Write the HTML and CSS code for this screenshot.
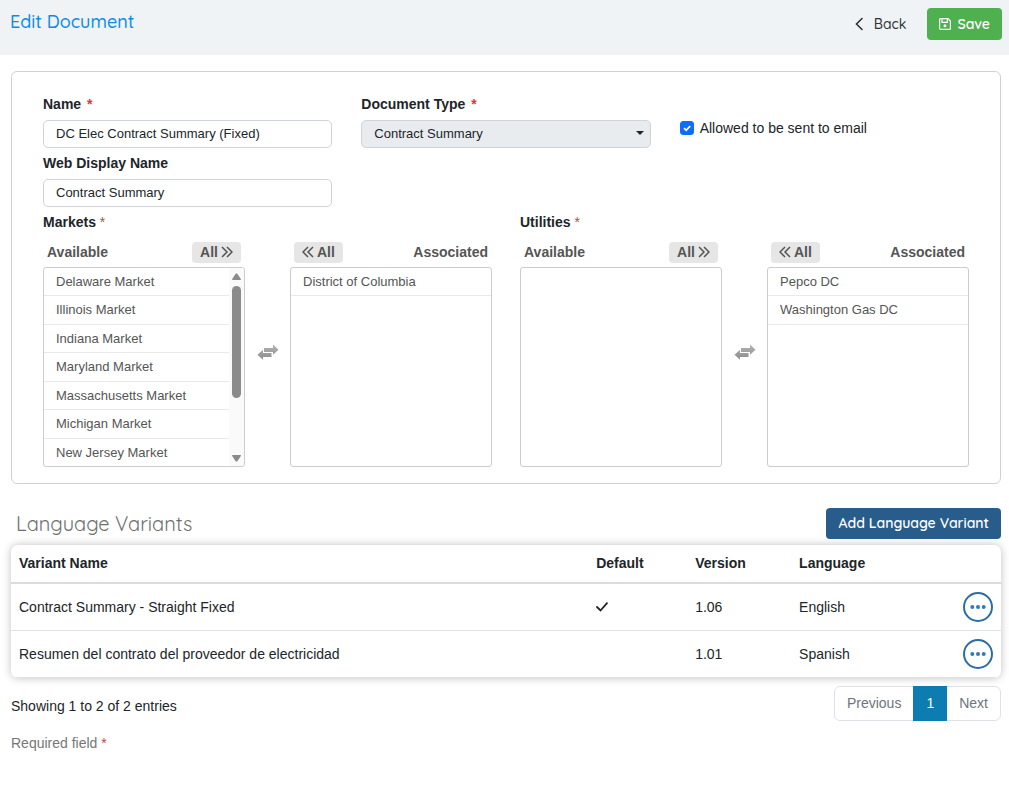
FILE: index.html
```html
<!DOCTYPE html>
<html lang="en">
<head>
<meta charset="utf-8">
<meta name="viewport" content="width=device-width, initial-scale=1">
<title>Edit Document</title>
<link rel="stylesheet" href="styles.css">
</head>
<body>
<svg class="sprite" aria-hidden="true">
  <defs>
    <linearGradient id="metal" x1="0" y1="0" x2="0" y2="1">
      <stop offset="0" stop-color="#b4b4b4"/>
      <stop offset="1" stop-color="#8c8c8c"/>
    </linearGradient>
  </defs>
  <symbol id="i-right" viewBox="0 0 12 12"><path d="M1 1l5 5-5 5M6 1l5 5-5 5" fill="none" stroke="currentColor" stroke-width="1.5"/></symbol>
  <symbol id="i-left" viewBox="0 0 12 12"><path d="M6 1L1 6l5 5M11 1L6 6l5 5" fill="none" stroke="currentColor" stroke-width="1.5"/></symbol>
  <symbol id="i-swap" viewBox="0 0 22 16"><path d="M7 4h9V.5L21.500 5.700l-5.500 5V8H7zM14.500 9H6V5.700L.5 10.800l5.500 5V13h8.500z" fill="url(#metal)"/></symbol>
  <symbol id="i-dots" viewBox="0 0 16 4"><g fill="currentColor"><circle cx="2.300" cy="2" r="2"/><circle cx="8" cy="2" r="2"/><circle cx="13.700" cy="2" r="2"/></g></symbol>
</svg>

<header class="topbar">
  <h1 class="title">Edit Document</h1>
  <div class="actions">
    <a class="back" href="#"><svg width="8" height="14" viewBox="0 0 8 14" aria-hidden="true"><path d="M7 1.500L1.500 7 7 12.500" fill="none" stroke="currentColor" stroke-width="1.600" stroke-linecap="round"/></svg>Back</a>
    <button class="btn save" type="button"><svg width="12" height="12" viewBox="0 0 12 12" fill="none" stroke="currentColor" stroke-width="1.200" aria-hidden="true"><path d="M1.600.6H9L11.400 3v7.400a1 1 0 0 1-1 1H1.600a1 1 0 0 1-1-1V1.600a1 1 0 0 1 1-1zM3 .8v3.500h5.300V.8"/><circle cx="6" cy="7.800" r="1.500" fill="currentColor" stroke="none"/></svg>Save</button>
  </div>
</header>

<main class="page">
  <form class="card">
    <div class="fields">
      <div class="column">
        <div class="field">
          <label for="name">Name <span class="star">*</span></label>
          <input class="control" id="name" type="text" value="DC Elec Contract Summary (Fixed)">
        </div>
        <div class="field">
          <label for="web-name">Web Display Name</label>
          <input class="control" id="web-name" type="text" value="Contract Summary">
        </div>
      </div>
      <div class="column">
        <div class="field">
          <label for="doc-type">Document Type <span class="star">*</span></label>
          <div class="select-wrap">
            <select class="control select" id="doc-type"><option>Contract Summary</option></select>
            <svg class="caret" width="8" height="4" viewBox="0 0 8 4" aria-hidden="true"><path d="M0 0h8L4 4z" fill="#212529"/></svg>
          </div>
        </div>
      </div>
      <div class="check">
        <span class="tick-wrap">
          <input class="tick" id="email-ok" type="checkbox" checked>
          <svg class="tick-mark" width="14" height="14" viewBox="0 0 14 14" aria-hidden="true"><path d="M4 7.200l2.200 2.100L10.200 5" fill="none" stroke="#fff" stroke-width="1.800"/></svg>
        </span>
        <label for="email-ok">Allowed to be sent to email</label>
      </div>
    </div>

    <div class="pickers">
      <section class="picker">
        <h2 class="legend">Markets <span class="req">*</span></h2>
        <div class="lists">
          <div class="side">
            <div class="side-head"><span>Available</span><button class="all" type="button">All <svg width="12" height="12"><use href="#i-right"/></svg></button></div>
            <div class="box">
              <ul class="items">
                <li>Delaware Market</li><li>Illinois Market</li><li>Indiana Market</li><li>Maryland Market</li><li>Massachusetts Market</li><li>Michigan Market</li><li>New Jersey Market</li>
              </ul>
              <div class="scroll" aria-hidden="true">
                <svg width="9" height="7" viewBox="0 0 9 7"><path d="M3.800.5h1.400L9 6.200 8.500 7h-8L0 6.200z"/></svg>
                <div class="track"><div class="thumb"></div></div>
                <svg width="9" height="7" viewBox="0 0 9 7"><path d="M.5 0h8l.5.800-3.800 5.700H3.800L0 .8z"/></svg>
              </div>
            </div>
          </div>
          <svg class="swap" width="22" height="16" aria-hidden="true"><use href="#i-swap"/></svg>
          <div class="side">
            <div class="side-head"><button class="all" type="button"><svg width="12" height="12"><use href="#i-left"/></svg> All</button><span>Associated</span></div>
            <div class="box"><ul class="items"><li>District of Columbia</li></ul></div>
          </div>
        </div>
      </section>
      <section class="picker">
        <h2 class="legend">Utilities <span class="req">*</span></h2>
        <div class="lists">
          <div class="side">
            <div class="side-head"><span>Available</span><button class="all" type="button">All <svg width="12" height="12"><use href="#i-right"/></svg></button></div>
            <div class="box"></div>
          </div>
          <svg class="swap" width="22" height="16" aria-hidden="true"><use href="#i-swap"/></svg>
          <div class="side">
            <div class="side-head"><button class="all" type="button"><svg width="12" height="12"><use href="#i-left"/></svg> All</button><span>Associated</span></div>
            <div class="box"><ul class="items"><li>Pepco DC</li><li>Washington Gas DC</li></ul></div>
          </div>
        </div>
      </section>
    </div>
  </form>

  <div class="section-head">
    <h2 class="section-title">Language Variants</h2>
    <button class="btn add" type="button">Add Language Variant</button>
  </div>

  <div class="panel">
    <table class="variants">
      <colgroup><col class="c-name"><col class="c-default"><col class="c-version"><col class="c-language"></colgroup>
      <thead><tr><th>Variant Name</th><th>Default</th><th>Version</th><th colspan="2">Language</th></tr></thead>
      <tbody>
        <tr>
          <td>Contract Summary - Straight Fixed</td>
          <td><svg class="mark" width="12" height="10" viewBox="0 0 12 10" role="img" aria-label="Yes"><path d="M1 5l3.500 3.500L11 1.200" fill="none" stroke="currentColor" stroke-width="1.800" stroke-linecap="round"/></svg></td>
          <td>1.06</td><td>English</td>
          <td class="menu-cell"><button class="more" type="button" aria-label="Actions"><svg width="16" height="4"><use href="#i-dots"/></svg></button></td>
        </tr>
        <tr>
          <td>Resumen del contrato del proveedor de electricidad</td>
          <td></td><td>1.01</td><td>Spanish</td>
          <td class="menu-cell"><button class="more" type="button" aria-label="Actions"><svg width="16" height="4"><use href="#i-dots"/></svg></button></td>
        </tr>
      </tbody>
    </table>
  </div>

  <div class="table-foot">
    <p class="info">Showing 1 to 2 of 2 entries</p>
    <nav class="pages" aria-label="Pages">
      <button type="button">Previous</button><button class="current" type="button" aria-current="page">1</button><button type="button">Next</button>
    </nav>
  </div>
  <p class="note">Required field <span class="req">*</span></p>
</main>
</body>
</html>
```
FILE: styles.css
```css
* { box-sizing: border-box; }
body {
  margin: 0;
  background: #fff;
  color: #212529;
  font: 14px/20px "Liberation Sans", Arial, sans-serif;
}
h1, h2, p, ul { margin: 0; padding: 0; }
button, input, select { font: inherit; color: inherit; }
button { cursor: pointer; }
svg { flex: none; }
.sprite { position: absolute; width: 0; height: 0; }

.topbar {
  display: flex;
  justify-content: space-between;
  align-items: flex-start;
  padding: 8px 7px 15px 10px;
  background: #eff3f6;
}
.title {
  color: #0d8ce6;
  font: 500 18px/28px Quicksand, Lato, sans-serif;
}
.actions { display: flex; align-items: center; gap: 21px; }
.back {
  display: flex;
  align-items: center;
  gap: 11px;
  color: #2f3337;
  font: 500 14px/20px Quicksand, Lato, sans-serif;
  text-decoration: none;
}
.btn {
  display: flex;
  align-items: center;
  justify-content: center;
  gap: 6px;
  border: 0;
  border-radius: 4px;
  color: #fff;
  font: 600 14px/20px Quicksand, Lato, sans-serif;
}
.save { padding: 6px 12px; background: #4fb050; }
.add { padding: 5px 12px 6px; background: #285c8b; }

.page { padding: 16px 8px 32px 11px; }
.card {
  padding: 22px 31px 16px;
  border: 1px solid #ced2d6;
  border-radius: 6px;
}
.fields { display: grid; grid-template-columns: repeat(3, 1fr); gap: 29px; }
.column, .field { display: flex; flex-direction: column; }
.column { gap: 5px; }
.field { gap: 6px; }
.field label, .legend { font-size: 14px; line-height: 20px; font-weight: 700; }
.star { margin-left: 2px; color: #dc3545; }
.req { color: #b94a48; font-weight: 400; }
.control {
  width: 100%;
  height: 28px;
  padding: 0 12px 2px;
  border: 1px solid #ced4da;
  border-radius: 5px;
  background: #fff;
  font-size: 13px;
}
.select-wrap { position: relative; }
.select { display: block; padding-bottom: 0; appearance: none; background: #e9ecef; }
.caret { position: absolute; right: 7px; top: 11px; pointer-events: none; }
.check { display: flex; align-items: center; align-self: start; gap: 6px; padding-top: 24px; }
.tick-wrap { position: relative; display: flex; }
.tick {
  width: 14px;
  height: 14px;
  margin: 0;
  border: 1px solid #ced4da;
  border-radius: 3px;
  appearance: none;
}
.tick:checked { border-color: #0d6efd; background: #0d6efd; }
.tick-mark { position: absolute; inset: 0; pointer-events: none; }

.pickers { display: grid; grid-template-columns: 1fr 1fr; gap: 28px; margin-top: 5px; }
.lists { display: grid; grid-template-columns: 1fr 45px 1fr; margin-top: 10px; color: #555; }
.side-head {
  display: flex;
  justify-content: space-between;
  align-items: flex-start;
  padding: 0 4px;
  margin-bottom: 4px;
  font-weight: 700;
}
.all {
  display: flex;
  align-items: center;
  gap: 3px;
  height: 21px;
  padding: 0 8px 2px;
  border: 0;
  border-radius: 4px;
  background: #e6e6e6;
  font-weight: 700;
}
.box {
  display: flex;
  height: 200px;
  border: 1px solid #ccc;
  border-radius: 3px;
  overflow: hidden;
}
.items { flex: 1; list-style: none; font-size: 13px; line-height: 19px; }
.items li { padding: 4px 12px; border-bottom: 1px solid #e9e9e9; }
.items li:nth-child(even) { padding-bottom: 5px; }
.scroll {
  display: flex;
  flex-direction: column;
  align-items: center;
  width: 15px;
  padding: 5px 0 4px;
  gap: 6px;
  background: #fafafa;
  fill: #8b8b8b;
}
.track { flex: 1; width: 9px; }
.thumb { height: 69%; border-radius: 5px; background: #8b8b8b; }
.swap { align-self: center; justify-self: center; margin-top: -6px; }

.section-head {
  display: flex;
  justify-content: space-between;
  align-items: center;
  margin: 24px 0 6px;
  padding-left: 5px;
}
.section-title { color: #6f6f6f; font: 400 20px/28px Quicksand, Lato, sans-serif; }

.panel {
  border-radius: 7px;
  box-shadow: 0 0 8px rgba(0, 0, 0, .25);
  overflow: hidden;
}
.variants { width: 100%; border-collapse: collapse; table-layout: fixed; }
.c-name { width: 58.3%; }
.c-default { width: 10%; }
.c-version { width: 10.5%; }
.c-language { width: 14%; }
.variants th { padding: 8px 8px 9px; text-align: left; }
.variants td { padding: 8px; }
.variants tbody tr { border-top: 1px solid #dee2e6; }
.variants tbody tr:first-child { border-top: 2px solid #dcdcdc; }
.variants tbody tr:last-child { border-bottom: 1px solid #dee2e6; }
.mark { display: block; }
.menu-cell { text-align: right; }
.more {
  display: inline-flex;
  align-items: center;
  justify-content: center;
  width: 30px;
  height: 30px;
  padding: 0;
  border: 2px solid #2a6ca5;
  border-radius: 50%;
  background: #fff;
  color: #337ab7;
  vertical-align: top;
}

.table-foot {
  display: flex;
  justify-content: space-between;
  align-items: center;
  margin-top: 8px;
}
.info { padding-top: 5px; }
.pages {
  display: flex;
  border: 1px solid #dee2e6;
  border-radius: 6px;
}
.pages button {
  margin: -1px 0;
  height: 35px;
  padding: 0 12px 2px;
  border: 0;
  background: none;
  color: #6c757d;
}
.pages .current { padding: 0 13px 2px; background: #0d7cb1; color: #fff; }
.note { margin-top: 12px; color: #777; }
```
